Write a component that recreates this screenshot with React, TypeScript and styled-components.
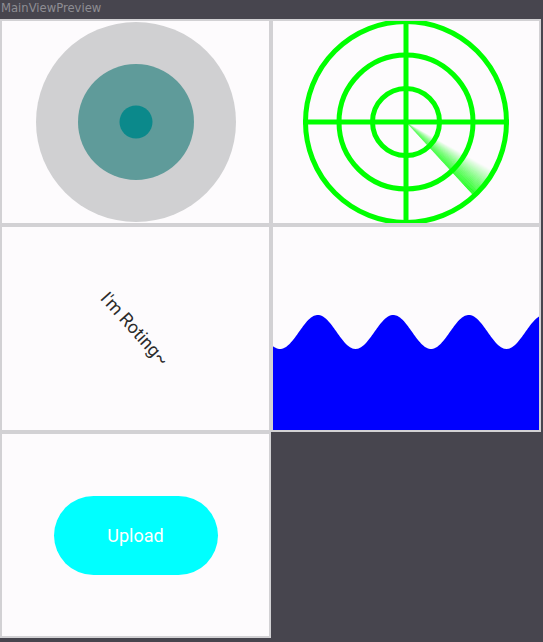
import React from "react";
import styled, { createGlobalStyle } from "styled-components";

const GlobalStyle = createGlobalStyle`
  html, body {
    margin: 0;
    padding: 0;
    background: #47454e;
  }
  body {
    width: 543px;
    height: 642px;
    overflow: hidden;
  }
`;

const Window = styled.div`
  width: 543px;
  height: 642px;
  background: #47454e;
  display: flex;
  flex-direction: column;
`;

const TitleBar = styled.div`
  height: 19px;
  padding-left: 1px;
  color: #8e8d93;
  font-family: "DejaVu Sans", "Liberation Sans", sans-serif;
  font-size: 11.6px;
  line-height: 16px;
`;

const Grid = styled.div`
  display: grid;
  grid-template-columns: 271px 270px;
  grid-template-rows: 206px 207px 206px;
`;

const Cell = styled.div`
  box-sizing: border-box;
  border: 2px solid #d2d1d4;
  background: #fdfbfd;
  display: flex;
  align-items: center;
  justify-content: center;
  overflow: hidden;
  position: relative;
`;

const WaveCell = styled(Cell)`
  align-items: stretch;
  justify-content: stretch;
`;

const RotatedText = styled.span`
  display: inline-block;
  transform: rotate(48deg);
  color: #2b2b2b;
  font-family: Roboto, "Liberation Sans", sans-serif;
  font-size: 18px;
  white-space: nowrap;
`;

const UploadButton = styled.button`
  width: 164px;
  height: 79px;
  border: none;
  border-radius: 40px;
  background: #00ffff;
  color: #ffffff;
  font-family: Roboto, "Liberation Sans", sans-serif;
  font-size: 18px;
  cursor: pointer;
`;

function Target() {
  return (
    <svg width="200" height="200" viewBox="0 0 200 200">
      <circle cx="100" cy="100" r="100" fill="#d0d0d2" />
      <circle cx="100" cy="100" r="58" fill="#5f9b9a" />
      <circle cx="100" cy="100" r="16.5" fill="#0b898b" />
    </svg>
  );
}

function Radar() {
  const R = 100.5;
  const slices = 40;
  const from = 29;
  const to = 47.5;
  const wedge = Array.from({ length: slices }, (_, i) => {
    const a1 = ((from + ((to - from) * i) / slices) * Math.PI) / 180;
    const a2 = ((from + ((to - from) * (i + 1)) / slices) * Math.PI) / 180;
    const op = Math.pow((i + 1) / slices, 1.1);
    const d = `M0 0 L${R * Math.cos(a1)} ${R * Math.sin(a1)} L${R * Math.cos(a2)} ${R * Math.sin(a2)} Z`;
    return <path key={i} d={d} fill="#00ff00" fillOpacity={op} />;
  });
  return (
    <svg width="212" height="212" viewBox="-106 -106 212 212" style={{ flexShrink: 0 }}>
      {wedge}
      <g fill="none" stroke="#00ff00" strokeWidth="5">
        <circle r={R} />
        <circle r={R * (2 / 3)} />
        <circle r={R / 3} />
        <line x1={-R - 2.5} y1="0" x2={R + 2.5} y2="0" />
        <line x1="0" y1={-R - 2.5} x2="0" y2={R + 2.5} />
      </g>
    </svg>
  );
}

function Wave() {
  const w = 266;
  const h = 203;
  const mid = 105;
  const amp = 17;
  const period = 75.5;
  let d = `M0 ${h}`;
  for (let x = 0; x <= w; x += 1) {
    const y = mid + amp * Math.cos((2 * Math.PI * (x - 7)) / period);
    d += ` L${x} ${y.toFixed(2)}`;
  }
  d += ` L${w} ${h} Z`;
  return (
    <svg width={w} height={h} viewBox={`0 0 ${w} ${h}`}>
      <path d={d} fill="#0000ff" />
    </svg>
  );
}

export default function App() {
  return (
    <Window>
      <GlobalStyle />
      <TitleBar>MainViewPreview</TitleBar>
      <Grid>
        <Cell>
          <Target />
        </Cell>
        <Cell>
          <Radar />
        </Cell>
        <Cell>
          <RotatedText>I'm Roting~</RotatedText>
        </Cell>
        <WaveCell>
          <Wave />
        </WaveCell>
        <Cell>
          <UploadButton type="button">Upload</UploadButton>
        </Cell>
      </Grid>
    </Window>
  );
}
